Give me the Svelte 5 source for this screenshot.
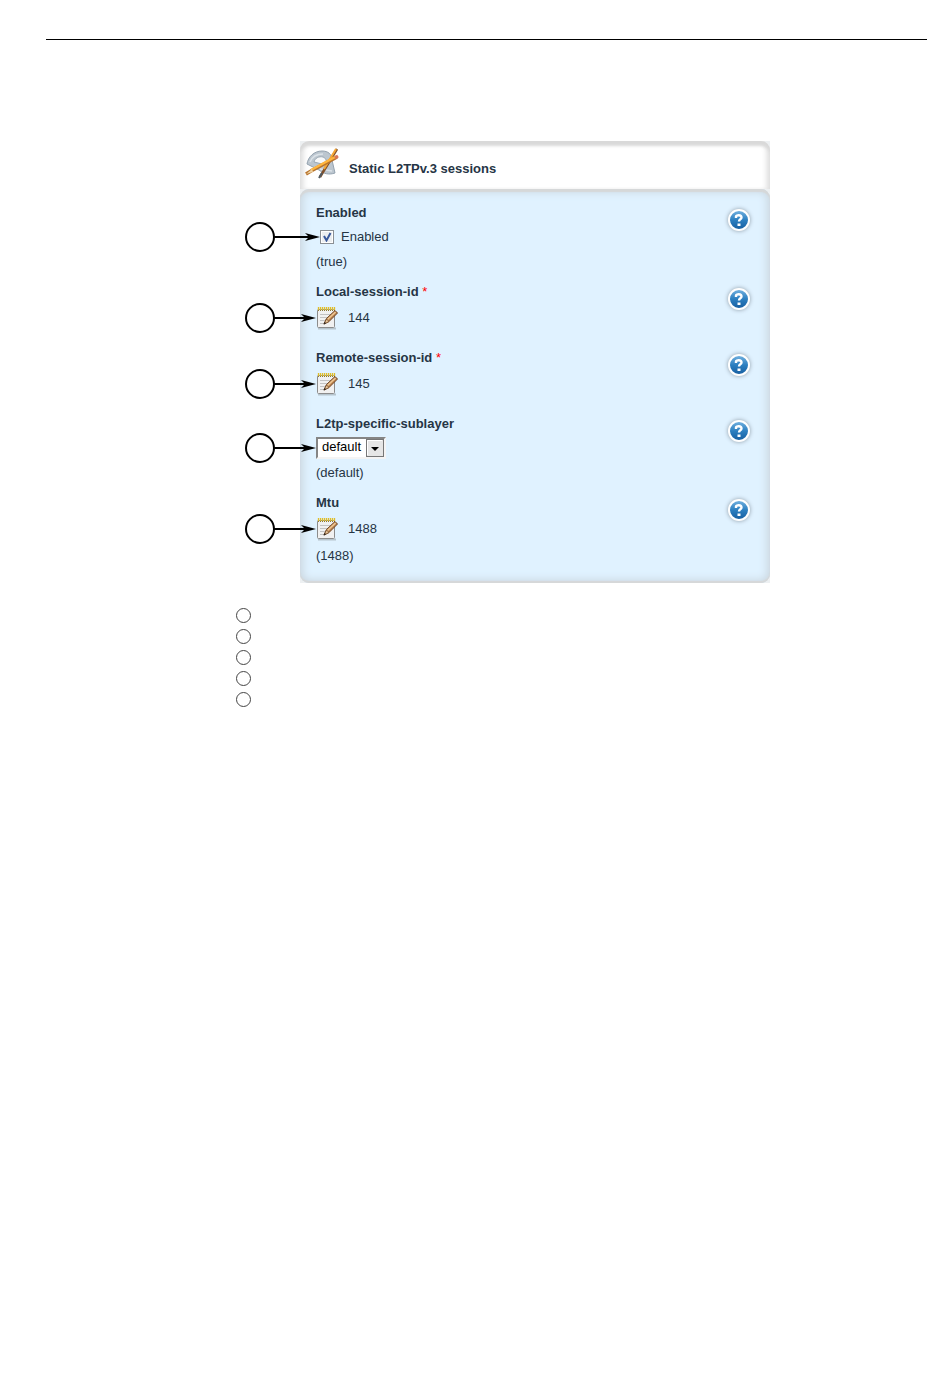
<script lang="ts">
  type Field = {
    id: string;
    label: string;
    kind: 'check' | 'note' | 'select';
    value: string;
    required?: boolean;
    hint?: string;
  };

  const fields: Field[] = [
    { id: 'enabled', label: 'Enabled', kind: 'check', value: 'Enabled', hint: '(true)' },
    { id: 'local-session-id', label: 'Local-session-id', kind: 'note', value: '144', required: true },
    { id: 'remote-session-id', label: 'Remote-session-id', kind: 'note', value: '145', required: true },
    { id: 'sublayer', label: 'L2tp-specific-sublayer', kind: 'select', value: 'default', hint: '(default)' },
    { id: 'mtu', label: 'Mtu', kind: 'note', value: '1488', hint: '(1488)' },
  ];

  let enabled = $state(true);
  let sublayer = $state('default');

  // The checkbox sits a little further in, so its arrow is longer.
  const reach = (field: Field) => (field.kind === 'check' ? 75 : 71);
</script>

{#snippet callout(length: number)}
  <svg class="callout" width={length} height="32" viewBox={`0 0 ${length} 32`} aria-hidden="true">
    <circle cx="15" cy="16" r="14" fill="#fff" stroke="#000" stroke-width="2" />
    <path d={`M29 16H${length - 10}`} stroke="#000" stroke-width="2" />
    <path d={`M${length} 16l-15-4 4 4-4 4z`} />
  </svg>
{/snippet}

{#snippet noteIcon()}
  <svg width="24" height="24" viewBox="0 0 24 24" aria-hidden="true">
    <path d="M2 22.5h18" stroke="#8d979c" stroke-width="2" opacity=".5" />
    <rect x="1.5" y="3.5" width="17" height="18" rx="1" fill="#f1f1f1" stroke="#8c8c8c" />
    <path d="M4 8.5h11M4 11.5h9M4 14.5h6M4 17.5h5" stroke="#c3c3c3" />
    <path d="M2 4.5h17" stroke="#8b7a36" stroke-dasharray="1 1" />
    <path d="M2.5 1v3m2-3v3m2-3v3m2-3v3m2-3v3m2-3v3m2-3v3m2-3v3m2-3v3" stroke="#dfbd2b" stroke-width="1.3" />
    <path d="M8 18l2.5-5.5 8.5-8 2.5 2.5-8.500 8.500z" fill="#bd8550" stroke="#6f4422" />
    <path d="M11.5 13.5l8-7.5" stroke="#efc996" stroke-width="1.5" />
    <path d="M8 18l2.5-5 2.5 2.5z" fill="#e8c89c" stroke="#6f4422" stroke-width=".7" />
    <path d="M7.5 18.5l1.2-2.5 1.3 1.3z" fill="#222" />
  </svg>
{/snippet}

<main class="page">
  <hr />

  <div class="figure">
    <section class="panel" aria-labelledby="panel-title">
      <header class="head">
        <svg width="36" height="36" viewBox="0 0 36 36" aria-hidden="true">
          <path
            d="M3 17C4 10 10 4 18 4c6 0 10 3 10 9l3 13c-6 2-11 1-16-3z"
            fill="#bcc6cf"
            stroke="#94a2af"
          />
          <path d="M10 15c1-4 5-6 9-5 3 1 4 4 3 8z" fill="#f7f8f9" stroke="#9ba8b3" />
          <path d="M6 15c2-5 7-8 13-8M16 22l12 2" fill="none" stroke="#dbe2e8" stroke-width="1.5" />
          <path d="M33 2L19 25l-3 5" fill="none" stroke="#80502b" stroke-width="2.5" />
          <path d="M32 2L20 22" stroke="#f5a735" stroke-width="2" />
          <path d="M18 26l-3 5" stroke="#4e5961" stroke-width="2" />
          <path d="M33 10L7 24l-5 3" fill="none" stroke="#b8732b" stroke-width="3.5" />
          <path d="M33 9L7 23" stroke="#ffb53e" stroke-width="2.5" />
          <path d="M8 22l-6 5 7-2z" fill="#ecd0a0" />
          <path d="M31 11l3-2" stroke="#d8765a" stroke-width="3" />
        </svg>
        <h1 id="panel-title">Static L2TPv.3 sessions</h1>
      </header>

      <form class="fields" onsubmit={(e) => e.preventDefault()}>
        {#each fields as field (field.id)}
          <div class="field">
            <div class="main">
              <div class="label" id={`${field.id}-label`}>
                {field.label}{#if field.required}&nbsp;<span class="required">*</span>{/if}
              </div>

              <div class="control {field.kind}">
                {@render callout(reach(field))}
                {#if field.kind === 'check'}
                  <input id={field.id} type="checkbox" bind:checked={enabled} />
                  <label for={field.id}>{field.value}</label>
                {:else if field.kind === 'select'}
                  <select id={field.id} aria-labelledby={`${field.id}-label`} bind:value={sublayer}>
                    <option value="default">{field.value}</option>
                  </select>
                  <svg class="drop" width="18" height="18" viewBox="0 0 18 18" aria-hidden="true">
                    <rect x=".5" y=".5" width="17" height="17" fill="#e6e6e6" stroke="#777" />
                    <path d="M1.5 16V1.5H16" fill="none" stroke="#fff" />
                    <path d="M5 8h8l-4 4z" />
                  </svg>
                {:else}
                  <button class="edit" type="button" aria-label={`Edit ${field.label}`}>
                    {@render noteIcon()}
                  </button>
                  <span>{field.value}</span>
                {/if}
              </div>

              {#if field.hint}
                <div class="hint">{field.hint}</div>
              {/if}
            </div>

            <button class="help" type="button" aria-label={`Help for ${field.label}`}>
              <svg width="24" height="24" viewBox="0 0 24 24" aria-hidden="true">
                <defs>
                  <linearGradient id={`${field.id}-blue`} x2="0" y2="1">
                    <stop offset="0" stop-color="#78b5e2" />
                    <stop offset=".5" stop-color="#2c7fc0" />
                    <stop offset="1" stop-color="#155c9f" />
                  </linearGradient>
                </defs>
                <circle cx="12" cy="12" r="10" fill={`url(#${field.id}-blue)`} stroke="#fff" stroke-width="2" />
                <path d="M9 10V8.5C9 7 14.5 6.5 14.5 9.5c0 2-2.500 1.700-2.500 4" fill="none" stroke="#fff" stroke-width="2.4" />
                <path d="M10.5 15.500h3v2.500h-3z" fill="#fff" />
              </svg>
            </button>
          </div>
        {/each}
      </form>
    </section>

    <ol class="legend">
      {#each fields as field (field.id)}
        <li aria-label={field.label}></li>
      {/each}
    </ol>
  </div>
</main>

<style>
  :global(body) {
    margin: 0;
    background: #fff;
  }

  .page {
    padding: 39px 23px 40px 46px;
    font-family: 'Liberation Sans', Arial, sans-serif;
    font-size: 13px;
    line-height: 16px;
    color: #263545;
  }

  hr {
    margin: 0;
    border: 0;
    border-top: 1px solid #000;
  }

  .figure {
    padding: 101px 0 0 190px;
  }

  .panel {
    max-width: 470px;
    margin-left: 64px;
    background: #edf0f2;
  }

  .head {
    display: flex;
    align-items: center;
    gap: 9px;
    box-sizing: border-box;
    height: 48px;
    padding-left: 4px;
    border-radius: 9px 9px 0 0;
    background: #fff;
    box-shadow:
      inset 0 5px 3px #d9d9d9,
      inset 6px 0 5px -2px #e4e4e4,
      inset -6px 0 5px -2px #e4e4e4;
  }

  h1 {
    margin: 0;
    padding-top: 8px;
    font-size: 13px;
    line-height: 16px;
  }

  .fields {
    display: flex;
    flex-direction: column;
    gap: 14px;
    padding: 16px 19px 19px 16px;
    border-radius: 9px;
    background: #e0f2ff;
    box-shadow:
      inset 0 3px 1px #d6d8d9,
      inset 0 -2px 1px #d6d8d9,
      inset 0 0 9px 3px #cbd7e0;
  }

  .field {
    display: flex;
    align-items: flex-start;
    justify-content: space-between;
  }

  .label {
    font-weight: bold;
  }

  .required {
    font-weight: normal;
    color: #f00;
  }

  .control {
    position: relative;
    display: flex;
    align-items: center;
    height: 32px;
  }

  .check {
    gap: 7px;
    padding-left: 4px;
  }

  .note {
    gap: 8px;
    height: 36px;
  }

  /* Annotation arrows reach in from the page margin over the panel's edge. */
  .callout {
    position: absolute;
    left: -71px;
    pointer-events: none;
  }

  input {
    appearance: none;
    width: 14px;
    height: 14px;
    margin: 0;
    border: 1px solid #8a8f94;
    background: #eceef0;
    box-shadow: inset 0 0 0 1px #fff;
  }

  input:checked {
    background: #eceef0
      url("data:image/svg+xml,%3Csvg xmlns='http://www.w3.org/2000/svg' viewBox='0 0 12 12'%3E%3Cpath d='M3 5l2.500 4.500L9.500 2' fill='none' stroke='%2339599c' stroke-width='2'/%3E%3C/svg%3E");
  }

  select {
    appearance: none;
    width: 70px;
    height: 22px;
    padding: 0 20px 2px 4px;
    border: 2px solid;
    border-color: #858585 #f4f4f4 #f4f4f4 #858585;
    border-radius: 0;
    background: #fff;
    font: inherit;
    color: #000;
  }

  .drop {
    position: absolute;
    left: 50px;
    pointer-events: none;
  }

  button {
    padding: 0;
    border: 0;
    background: none;
    cursor: pointer;
  }

  button svg {
    display: block;
  }

  .hint {
    line-height: 17px;
  }

  .help {
    margin-top: 3px;
    filter: drop-shadow(0 0 2px #8f9ca6);
  }

  .legend {
    margin: 22px 0 0;
    padding: 0;
    list-style: none;
  }

  .legend li {
    display: flex;
    align-items: center;
    height: 21px;
  }

  .legend li::before {
    content: '';
    box-sizing: border-box;
    width: 15px;
    height: 15px;
    border: 1px solid #444;
    border-radius: 50%;
  }
</style>
